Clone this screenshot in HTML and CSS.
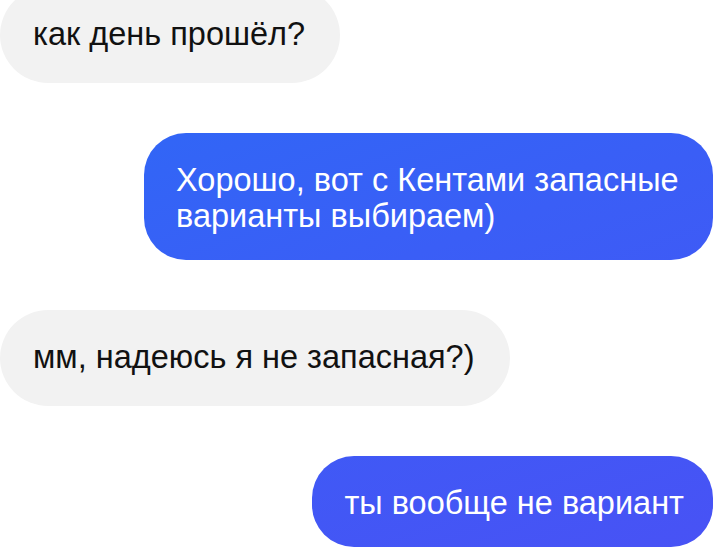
FILE: index.html
```html
<!DOCTYPE html>
<html lang="ru">
<head>
    <meta charset="UTF-8">
    <title>Чат</title>
    <link rel="stylesheet" href="styles.css">
</head>
<body>
<div class="chat">
    <div class="msg in">как день прошёл?</div>
    <div class="msg out">Хорошо, вот с Кентами запасные варианты выбираем)</div>
    <div class="msg in">мм, надеюсь я не запасная?)</div>
    <div class="msg out">ты вообще не вариант</div>
</div>
</body>
</html>
```

FILE: styles.css
```css
body {
    margin: 0;
    background: #fff;
    font-family: "Liberation Sans", Arial, sans-serif;
    overflow: hidden;
}

.chat {
    display: flex;
    flex-direction: column;
    gap: 50px;
    margin-top: -13px;
    padding-right: 1px;
}

.msg {
    font-size: 32.5px;
    line-height: 35px;
    padding: 30px 35px 31px 33px;
    border-radius: 48px;
}

.msg.in {
    align-self: flex-start;
    background: #f2f2f2;
    color: #111;
}

.msg.out {
    align-self: flex-end;
    color: #fff;
    border-radius: 42px;
    line-height: 36px;
    padding: 29px 29px 26px 32px;
    max-width: 508px;
    background: linear-gradient(160deg, #2a6cf6 0%, #3a5ef6 50%, #4852f5 100%) fixed;
}
```
